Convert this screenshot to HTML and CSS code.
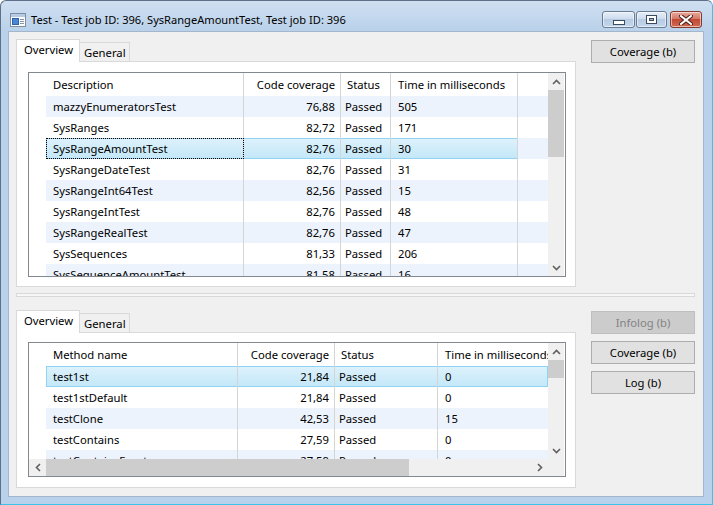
FILE: index.html
```html
<!DOCTYPE html>
<html>
<head>
<meta charset="utf-8">
<title>Test</title>
<link rel="stylesheet" href="styles.css">
</head>
<body>
<div class="window">
  <div class="titlebar">
    <svg class="appicon" width="16" height="14" viewBox="0 0 16 14">
      <rect x="0.5" y="0.5" width="15" height="13" fill="#fdfdfd" stroke="#7d8ea3"/>
      <rect x="1" y="1" width="14" height="3" fill="#b5cbe6"/>
      <rect x="2.5" y="5.5" width="6" height="6" fill="#4a86d4" stroke="#2d62ad"/>
      <rect x="10" y="6" width="4" height="1" fill="#8696aa"/>
      <rect x="10" y="8" width="4" height="1" fill="#8696aa"/>
      <rect x="10" y="10" width="4" height="1" fill="#8696aa"/>
    </svg>
    <span class="title">Test - Test job ID: 396, SysRangeAmountTest, Test job ID: 396</span>
    <div class="wbtns">
      <div class="wbtn min"><span class="g-min"></span></div>
      <div class="wbtn max"><span class="g-max"></span></div>
      <div class="wbtn close">
        <svg width="14" height="10" viewBox="0 0 14 10">
          <path d="M2 1 L12 9 M12 1 L2 9" stroke="#4a1f18" stroke-width="4" stroke-linecap="square"/>
          <path d="M2 1 L12 9 M12 1 L2 9" stroke="#ffffff" stroke-width="2" stroke-linecap="square"/>
        </svg>
      </div>
    </div>
  </div>

  <div class="client">
    <div class="section sec-top">
      <div class="tabctl">
        <div class="tabs">
          <div class="tab active">Overview</div>
          <div class="tab">General</div>
        </div>
        <div class="panel p1">
          <div class="grid g1">
            <div class="gtop">
              <div class="gmain">
                <div class="row hdr">
                  <div class="c rh"></div><div class="c d">Description</div><div class="c cv">Code coverage</div><div class="c st">Status</div><div class="c tm">Time in milliseconds</div><div class="c fl"></div>
                </div>
                <div class="rows">
                  <div class="row alt"><div class="c rh"></div><div class="c d">mazzyEnumeratorsTest</div><div class="c cv">76,88</div><div class="c st">Passed</div><div class="c tm">505</div><div class="c fl"></div></div>
                  <div class="row"><div class="c rh"></div><div class="c d">SysRanges</div><div class="c cv">82,72</div><div class="c st">Passed</div><div class="c tm">171</div><div class="c fl"></div></div>
                  <div class="row alt"><div class="c rh"></div><div class="sel"><div class="c d focus">SysRangeAmountTest</div><div class="c cv">82,76</div><div class="c st">Passed</div><div class="c tm">30</div></div><div class="c fl"></div></div>
                  <div class="row"><div class="c rh"></div><div class="c d">SysRangeDateTest</div><div class="c cv">82,76</div><div class="c st">Passed</div><div class="c tm">31</div><div class="c fl"></div></div>
                  <div class="row alt"><div class="c rh"></div><div class="c d">SysRangeInt64Test</div><div class="c cv">82,56</div><div class="c st">Passed</div><div class="c tm">15</div><div class="c fl"></div></div>
                  <div class="row"><div class="c rh"></div><div class="c d">SysRangeIntTest</div><div class="c cv">82,76</div><div class="c st">Passed</div><div class="c tm">48</div><div class="c fl"></div></div>
                  <div class="row alt"><div class="c rh"></div><div class="c d">SysRangeRealTest</div><div class="c cv">82,76</div><div class="c st">Passed</div><div class="c tm">47</div><div class="c fl"></div></div>
                  <div class="row"><div class="c rh"></div><div class="c d">SysSequences</div><div class="c cv">81,33</div><div class="c st">Passed</div><div class="c tm">206</div><div class="c fl"></div></div>
                  <div class="row alt"><div class="c rh"></div><div class="c d">SysSequenceAmountTest</div><div class="c cv">81,58</div><div class="c st">Passed</div><div class="c tm">16</div><div class="c fl"></div></div>
                </div>
              </div>
              <div class="vscroll vs1">
                <div class="sarrow"><svg width="9" height="6" viewBox="0 0 9 6"><polyline points="1,5 4.5,1.5 8,5" fill="none" stroke="#5f5f5f" stroke-width="1.6"/></svg></div>
                <div class="thumb"></div>
                <div class="track"></div>
                <div class="sarrow"><svg width="9" height="6" viewBox="0 0 9 6"><polyline points="1,1 4.5,4.5 8,1" fill="none" stroke="#5f5f5f" stroke-width="1.6"/></svg></div>
              </div>
            </div>
          </div>
        </div>
      </div>
      <div class="btncol">
        <div class="btn">Coverage (b)</div>
      </div>
    </div>

    <div class="splitter"></div>

    <div class="section sec-bot">
      <div class="tabctl">
        <div class="tabs">
          <div class="tab active">Overview</div>
          <div class="tab">General</div>
        </div>
        <div class="panel p2">
          <div class="grid g2">
            <div class="gtop">
              <div class="gmain">
                <div class="row hdr">
                  <div class="c rh"></div><div class="c d">Method name</div><div class="c cv">Code coverage</div><div class="c st">Status</div><div class="c tm">Time in milliseconds</div>
                </div>
                <div class="rows">
                  <div class="row alt"><div class="c rh"></div><div class="sel"><div class="c d">test1st</div><div class="c cv">21,84</div><div class="c st">Passed</div><div class="c tm">0</div></div></div>
                  <div class="row"><div class="c rh"></div><div class="c d">test1stDefault</div><div class="c cv">21,84</div><div class="c st">Passed</div><div class="c tm">0</div></div>
                  <div class="row alt"><div class="c rh"></div><div class="c d">testClone</div><div class="c cv">42,53</div><div class="c st">Passed</div><div class="c tm">15</div></div>
                  <div class="row"><div class="c rh"></div><div class="c d">testContains</div><div class="c cv">27,59</div><div class="c st">Passed</div><div class="c tm">0</div></div>
                  <div class="row alt"><div class="c rh"></div><div class="c d">testContainsExact</div><div class="c cv">27,59</div><div class="c st">Passed</div><div class="c tm">0</div></div>
                </div>
              </div>
              <div class="vscroll vs2">
                <div class="sarrow"><svg width="9" height="6" viewBox="0 0 9 6"><polyline points="1,5 4.5,1.5 8,5" fill="none" stroke="#5f5f5f" stroke-width="1.6"/></svg></div>
                <div class="thumb"></div>
                <div class="track"></div>
                <div class="sarrow"><svg width="9" height="6" viewBox="0 0 9 6"><polyline points="1,1 4.5,4.5 8,1" fill="none" stroke="#5f5f5f" stroke-width="1.6"/></svg></div>
              </div>
            </div>
            <div class="gbot">
              <div class="hscroll">
                <div class="harrow"><svg width="6" height="9" viewBox="0 0 6 9"><polyline points="5,1 1.5,4.5 5,8" fill="none" stroke="#5f5f5f" stroke-width="1.6"/></svg></div>
                <div class="hthumb"></div>
                <div class="htrack"></div>
                <div class="harrow"><svg width="6" height="9" viewBox="0 0 6 9"><polyline points="1,1 4.5,4.5 1,8" fill="none" stroke="#5f5f5f" stroke-width="1.6"/></svg></div>
              </div>
              <div class="corner"></div>
            </div>
          </div>
        </div>
      </div>
      <div class="btncol">
        <div class="btn disabled">Infolog (b)</div>
        <div class="btn">Coverage (b)</div>
        <div class="btn">Log (b)</div>
      </div>
    </div>
  </div>
</div>
</body>
</html>
```

FILE: styles.css
```css
* { box-sizing: border-box; margin: 0; padding: 0; }
html, body { width: 713px; height: 505px; overflow: hidden; background: #ffffff; }
body {
  font-family: "Segoe UI", "Noto Sans", "Open Sans", sans-serif;
  font-size: 11.25px;
  color: #000;
}

.window {
  width: 713px;
  height: 505px;
  border: 1px solid #5e7085;
  border-right-color: #3cc3e8;
  border-bottom-color: #3cc3e8;
  border-radius: 6px 6px 0 0;
  background: linear-gradient(#cfdff1, #b9d1ea 30px, #b9d1ea);
  display: flex;
  flex-direction: column;
}

/* title bar */
.titlebar {
  height: 30px;
  flex: none;
  display: flex;
  align-items: flex-start;
  padding-left: 9px;
}
.appicon { margin-top: 12px; flex: none; }
.title {
  margin-left: 5px;
  margin-top: 11px;
  line-height: 16px;
  font-size: 11.1px;
  white-space: nowrap;
}
.wbtns {
  margin-left: auto;
  margin-top: 10px;
  margin-right: 10px;
  display: flex;
}
.wbtn {
  height: 17px;
  border: 1px solid #6b7c92;
  border-radius: 3px;
  display: flex;
  align-items: center;
  justify-content: center;
  background: linear-gradient(#e6eef8, #cfdcee 45%, #b6cbe4 50%, #c4d6ec);
  box-shadow: inset 0 0 0 1px rgba(255,255,255,0.55);
}
.wbtn.min { width: 33px; }
.wbtn.max { width: 31px; margin-left: 1px; }
.wbtn.close {
  width: 32px;
  margin-left: 3px;
  border-color: #84392d;
  background: linear-gradient(#e9a99b, #d47a69 45%, #c24a35 50%, #cf6a52);
}
.g-min {
  width: 12px;
  height: 5px;
  margin-top: 6px;
  background: #fff;
  border: 1px solid #3c4b5e;
}
.g-max {
  width: 11px;
  height: 9px;
  border: 1px solid #3c4b5e;
  background: #fff;
  box-shadow: inset 0 0 0 2px #fff, inset 0 0 0 3px #3c4b5e, inset 0 0 0 9px #9db5d3;
}

/* client */
.client {
  flex: 1;
  margin: 0 8px 7px 7px;
  border: 1px solid #a3b6cb;
  background: #f0f0f0;
  padding: 7px 8px 0 7px;
  display: flex;
  flex-direction: column;
}
.section { display: flex; flex: none; }
.sec-top { height: 248px; }
.sec-bot { height: 178px; }
.tabctl { width: 560px; display: flex; flex-direction: column; }
.tabs { height: 22px; display: flex; align-items: flex-end; flex: none; }
.tab {
  height: 19px;
  padding: 0 3px 0 4px;
  border: 1px solid #d9d9d9;
  border-bottom: none;
  background: #f0f0f0;
  line-height: 19px;
  margin-left: -1px;
}
.tab.active {
  position: relative;
  height: 23px;
  margin-bottom: -1px;
  margin-left: 0;
  background: #ffffff;
  padding: 0 6px 0 7px;
  line-height: 20px;
}
.panel {
  flex: 1;
  border: 1px solid #d9d9d9;
  background: #ffffff;
  padding-left: 11px;
}
.p1 { padding-top: 10px; }
.p2 { padding-top: 9px; }

.btncol { width: 104px; margin-left: 15px; display: flex; flex-direction: column; gap: 7px; padding-top: 1px; }
.btn {
  height: 23px;
  border: 1px solid #adadad;
  background: #e1e1e1;
  text-align: center;
  line-height: 21px;
  white-space: nowrap;
}
.btn.disabled { background: #cccccc; border-color: #bfbfbf; color: #838383; }

.splitter {
  flex: none;
  height: 4px;
  margin: 6px 0 13px 0;
  border: 1px solid #d9d9d9;
  background: #f7f7f7;
}

/* grids */
.grid {
  width: 538px;
  border: 1px solid #828790;
  background: #ffffff;
  display: flex;
  flex-direction: column;
}
.g1 { height: 205px; }
.g2 { height: 135px; }
.gtop { display: flex; flex: 1; min-height: 0; padding-right: 1px; }
.gmain { width: 519px; display: flex; flex-direction: column; overflow: hidden; }
.row { display: flex; height: 21px; flex: none; white-space: nowrap; }
.row.hdr { height: 23px; background: #ffffff; }
.row.alt { background: #edf3fc; }
.rows { flex: 1; overflow: hidden; }
.c {
  height: 100%;
  line-height: 22px;
  padding-left: 7px;
  overflow: hidden;
  flex: none;
  border-right: 1px solid #d5d5d5;
}
.hdr .c { line-height: 24px; }
.c.rh { width: 17px; padding: 0; border-right: none; background: #ffffff; }
.c.fl { border-right: none; padding: 0; }
.c.cv { text-align: right; padding: 0 5px 0 0; }
.c.st { padding-left: 4px; }
.hdr .c.st { padding-left: 6px; }

.g1 .c.d { width: 198px; }
.g1 .c.cv { width: 97px; }
.g1 .c.st { width: 50px; }
.g1 .c.tm { width: 127px; }
.g1 .c.fl { width: 30px; }

.g2 .c.d { width: 192px; }
.g2 .c.cv { width: 97px; }
.g2 .c.st { width: 103px; }
.g2 .c.tm { width: 110px; border-right: none; }

.sel {
  display: flex;
  height: 21px;
  background: linear-gradient(#def2fc, #c3e7f8);
  box-shadow: inset 0 0 0 1px #8fd4f2;
}
.c.focus { outline: 1px dotted #000; outline-offset: -1px; }

/* scrollbars */
.vscroll { width: 16px; display: flex; flex-direction: column; background: #f0f0f0; }
.sarrow { height: 17px; flex: none; display: flex; align-items: center; justify-content: center; }
.track { flex: 1; }
.thumb { background: #cdcdcd; flex: none; }
.vs1 .thumb { height: 67px; }
.vs2 .thumb { height: 18px; }

.gbot { display: flex; height: 17px; flex: none; padding-right: 1px; }
.hscroll { width: 519px; display: flex; background: #f0f0f0; }
.harrow { width: 17px; flex: none; display: flex; align-items: center; justify-content: center; }
.hthumb { width: 363px; background: #cdcdcd; flex: none; }
.htrack { flex: 1; }
.corner { width: 16px; background: #f0f0f0; }
```
